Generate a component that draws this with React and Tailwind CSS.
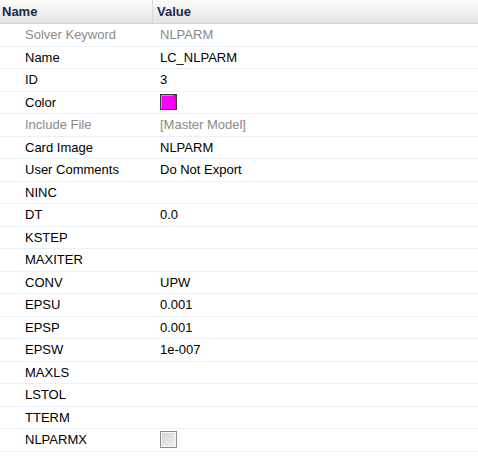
import React from 'react';

const rows = [
    { name: 'Solver Keyword', value: 'NLPARM', muted: true },
    { name: 'Name', value: 'LC_NLPARM' },
    { name: 'ID', value: '3' },
    { name: 'Color', swatch: true },
    { name: 'Include File', value: '[Master Model]', muted: true },
    { name: 'Card Image', value: 'NLPARM' },
    { name: 'User Comments', value: 'Do Not Export' },
    { name: 'NINC', value: '' },
    { name: 'DT', value: '0.0' },
    { name: 'KSTEP', value: '' },
    { name: 'MAXITER', value: '' },
    { name: 'CONV', value: 'UPW' },
    { name: 'EPSU', value: '0.001' },
    { name: 'EPSP', value: '0.001' },
    { name: 'EPSW', value: '1e-007' },
    { name: 'MAXLS', value: '' },
    { name: 'LSTOL', value: '' },
    { name: 'TTERM', value: '' },
    { name: 'NLPARMX', checkbox: true },
];

function App() {
    return (
        <div className="w-[478px] h-[468px] bg-white overflow-hidden text-[13px] text-black" style={{ fontFamily: '"Liberation Sans", Arial, sans-serif' }}>
            {/* Header */}
            <div className="flex h-[24px] bg-gradient-to-b from-[#fbfbfb] via-[#f0f0f0] to-[#e4e4e4] border-b border-[#d5d5d5] text-[#1b2a4a] font-bold">
                <div className="w-[153px] pl-[2px] flex items-center border-r border-[#d9d9d9]">Name</div>
                <div className="flex-1 pl-[4px] flex items-center">Value</div>
            </div>

            {/* Rows */}
            {rows.map((r) => (
                <div key={r.name} className="flex h-[22.5px] border-b border-[#e8f0f9]">
                    <div className={`w-[153px] pl-[25px] flex items-center ${r.muted ? 'text-[#8a8a8a]' : ''}`}>{r.name}</div>
                    <div className={`flex-1 pl-[7px] flex items-center ${r.muted ? 'text-[#8a8a8a]' : ''}`}>
                        {r.swatch && (
                            <div className="w-[17px] h-[16px] border border-[#3a3a3a] bg-[#ff00ff] shadow-[inset_-3px_0_0_#e000e0,inset_1px_1px_0_#ff66ff]" />
                        )}
                        {r.checkbox && (
                            <div className="w-[17px] h-[17px] border border-[#8e8e8e] bg-gradient-to-br from-[#d0d0d0] to-[#f4f4f4] shadow-[inset_0_0_0_1px_#f6f6f6]" />
                        )}
                        {!r.swatch && !r.checkbox && r.value}
                    </div>
                </div>
            ))}
        </div>
    );
}

export default App;
